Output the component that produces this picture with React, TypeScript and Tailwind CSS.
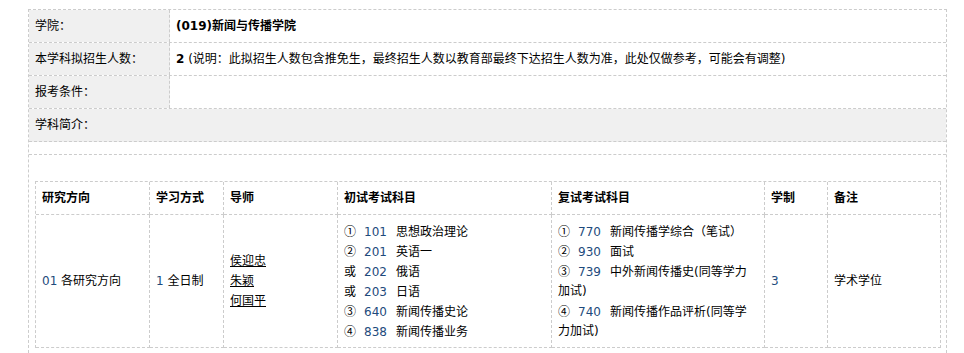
import React from "react";

const FONT = {
  fontFamily: '"DejaVu Sans", "Noto Sans CJK SC", sans-serif',
};

type Item = { p: string; c: string; t: string; wrap?: string };

const chushi: Item[] = [
  { p: "①", c: "101", t: "思想政治理论" },
  { p: "②", c: "201", t: "英语一" },
  { p: "或", c: "202", t: "俄语" },
  { p: "或", c: "203", t: "日语" },
  { p: "③", c: "640", t: "新闻传播史论" },
  { p: "④", c: "838", t: "新闻传播业务" },
];

const fushi: Item[] = [
  { p: "①", c: "770", t: "新闻传播学综合（笔试）" },
  { p: "②", c: "930", t: "面试" },
  { p: "③", c: "739", t: "中外新闻传播史(同等学力", wrap: "加试)" },
  { p: "④", c: "740", t: "新闻传播作品评析(同等学", wrap: "力加试)" },
];

function Subjects({ items }: { items: Item[] }) {
  return (
    <div className="flex flex-col">
      {items.map((it, i) => (
        <React.Fragment key={i}>
          <div className="h-[20px] leading-[20px] whitespace-nowrap">
            <span
              className="inline-block w-[20px]"
              style={{ fontFamily: '"Noto Sans CJK SC", sans-serif' }}
            >
              {it.p}
            </span>
            <span className="inline-block w-[32px] text-[#1e4a7c]">{it.c}</span>
            <span>{it.t}</span>
          </div>
          {it.wrap && (
            <div className="h-[20px] leading-[20px] whitespace-nowrap">{it.wrap}</div>
          )}
        </React.Fragment>
      ))}
    </div>
  );
}

const B = "border-dashed border-[#cccccc]";

export default function App() {
  return (
    <div className="bg-white w-[964px] h-[353px] overflow-hidden text-[12px] text-black" style={FONT}>
      <div className="pl-[28px] pt-[9px]">
        <div className={`w-[919px] border-t border-l border-r ${B}`}>
          {/* Row 1 */}
          <div className={`flex h-[33px] border-b ${B}`}>
            <div className={`w-[141px] bg-[#f0f0f0] border-r ${B} pl-[6px] flex items-center`}>学院：</div>
            <div className="flex-1 pl-[6px] flex items-center font-bold">(019)新闻与传播学院</div>
          </div>
          {/* Row 2 */}
          <div className={`flex h-[33px] border-b ${B}`}>
            <div className={`w-[141px] bg-[#f0f0f0] border-r ${B} pl-[6px] flex items-center`}>本学科拟招生人数：</div>
            <div className="flex-1 pl-[6px] flex items-center whitespace-nowrap">
              <span className="font-bold">2</span>
              <span>&nbsp;(说明：此拟招生人数包含推免生，最终招生人数以教育部最终下达招生人数为准，此处仅做参考，可能会有调整)</span>
            </div>
          </div>
          {/* Row 3 */}
          <div className={`flex h-[33px] border-b ${B}`}>
            <div className={`w-[141px] bg-[#f0f0f0] border-r ${B} pl-[6px] flex items-center`}>报考条件：</div>
            <div className="flex-1" />
          </div>
          {/* Row 4 */}
          <div className={`flex h-[33px] border-b ${B} bg-[#f0f0f0] pl-[6px] items-center`}>学科简介：</div>
          {/* Row 5 */}
          <div className={`h-[13px] border-b ${B}`} />
          {/* Row 6 */}
          <div className="pt-[26px] pl-[6px] pr-[5px] pb-[10px]">
            <div className={`grid grid-cols-[114px_74px_114px_214px_213px_63px_113px] border-t border-l ${B}`}>
              {["研究方向", "学习方式", "导师", "初试考试科目", "复试考试科目", "学制", "备注"].map((h) => (
                <div key={h} className={`h-[33px] border-r border-b ${B} pl-[6px] flex items-center font-bold`}>
                  {h}
                </div>
              ))}
              <div className={`h-[133px] border-r border-b ${B} pl-[6px] flex items-center`}>
                <span className="text-[#1e4a7c]">01</span>
                <span>&nbsp;各研究方向</span>
              </div>
              <div className={`h-[133px] border-r border-b ${B} pl-[6px] flex items-center`}>
                <span className="text-[#1e4a7c]">1</span>
                <span>&nbsp;全日制</span>
              </div>
              <div className={`h-[133px] border-r border-b ${B} pl-[6px] flex flex-col justify-center`}>
                <span className="underline leading-[20px]">侯迎忠</span>
                <span className="underline leading-[20px]">朱颖</span>
                <span className="underline leading-[20px]">何国平</span>
              </div>
              <div className={`h-[133px] border-r border-b ${B} pl-[6px] flex items-center`}>
                <Subjects items={chushi} />
              </div>
              <div className={`h-[133px] border-r border-b ${B} pl-[6px] flex items-center`}>
                <Subjects items={fushi} />
              </div>
              <div className={`h-[133px] border-r border-b ${B} pl-[6px] flex items-center text-[#1e4a7c]`}>3</div>
              <div className={`h-[133px] border-r border-b ${B} pl-[6px] flex items-center`}>学术学位</div>
            </div>
          </div>
        </div>
      </div>
    </div>
  );
}
